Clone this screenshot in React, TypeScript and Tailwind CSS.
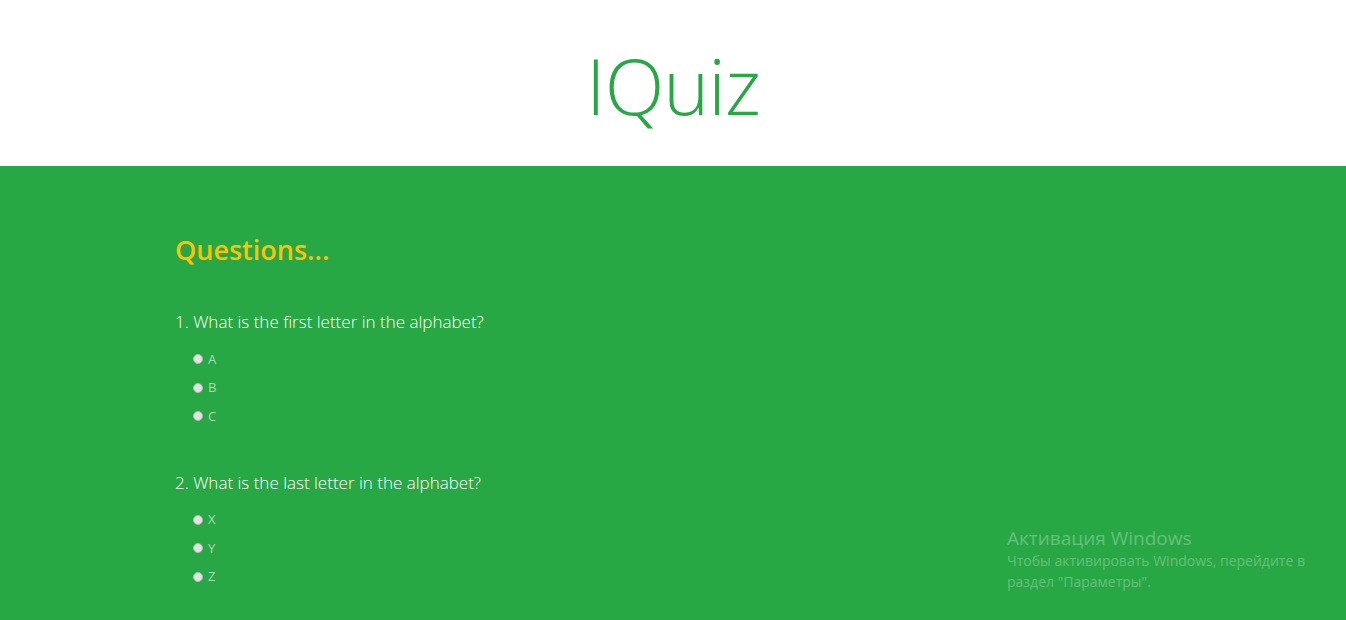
const questions = [
  { id: 1, text: "What is the first letter in the alphabet?", options: ["A", "B", "C"] },
  { id: 2, text: "What is the last letter in the alphabet?", options: ["X", "Y", "Z"] },
];

const QuestionBlock = ({ id, text, options }: { id: number; text: string; options: string[] }) => {
  return (
    <div className="mb-[40px]">
      <p className="text-[17px] font-light text-white leading-[24px] mb-[11px]">
        {id}. {text}
      </p>
      <div className="pl-[18px] flex flex-col">
        {options.map((opt) => (
          <label key={opt} className="flex items-center h-[28.5px] text-[13px] text-white/60">
            <input
              type="radio"
              name={`q${id}`}
              className="appearance-none w-[10px] h-[10px] rounded-full bg-[#e3e3e3] border border-[#b9b9b9] mr-[5px]"
            />
            {opt}
          </label>
        ))}
      </div>
    </div>
  );
};

const App = () => {
  return (
    <div className="min-h-[620px] bg-[#28a745] font-['Open_Sans',sans-serif] relative">
      {/* Header */}
      <header className="bg-white h-[166px] flex items-center justify-center">
        <h1 className="text-[#28a745] text-[78px] font-light leading-none tracking-[-1px] pt-[4px]">IQuiz</h1>
      </header>

      {/* Questions */}
      <main className="w-[996px] mx-auto pt-[64px]">
        <h2 className="text-[#ffc107] text-[27px] font-semibold leading-[40px] mb-[40px]">Questions...</h2>
        {questions.map((q) => (
          <QuestionBlock key={q.id} {...q} />
        ))}
      </main>

      {/* Windows watermark */}
      <div className="absolute left-[1007px] top-[526px] text-white/30 pointer-events-none">
        <div className="text-[19px] leading-[24px]">Активация Windows</div>
        <div className="text-[14px] leading-[21px] w-[310px]">Чтобы активировать Windows, перейдите в раздел "Параметры".</div>
      </div>
    </div>
  );
};

export default App;
